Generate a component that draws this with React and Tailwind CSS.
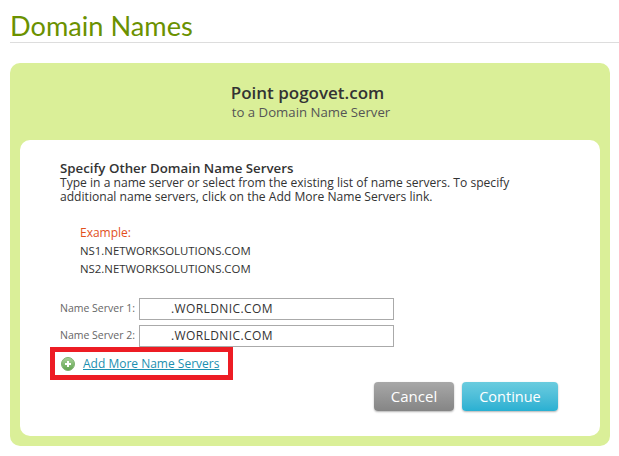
const font = { fontFamily: '"Open Sans", sans-serif' };
const headingFont = { fontFamily: 'Lato, sans-serif' };

const PlusIcon = () => (
  <svg width="14" height="14" viewBox="0 0 14 14" className="shrink-0">
    <defs>
      <linearGradient id="plusFill" x1="0" y1="0" x2="0" y2="1">
        <stop offset="0" stopColor="#a9d39a" />
        <stop offset="1" stopColor="#5fa24e" />
      </linearGradient>
    </defs>
    <circle cx="7" cy="7" r="6.5" fill="url(#plusFill)" stroke="#7fb070" strokeWidth="1" />
    <path d="M7 4v6M4 7h6" stroke="#fff" strokeWidth="2" />
  </svg>
);

const ServerRow = ({ label }) => (
  <div className="flex items-center h-[22px]">
    <span className="w-[79px] text-[10.5px] text-[#666] whitespace-nowrap">{label}</span>
    <div className="w-[255px] h-[22px] border border-[#aaa] bg-white pl-[31px] flex items-center text-[12px] tracking-[0.4px] text-[#333]">
      .WORLDNIC.COM
    </div>
  </div>
);

export default function App() {
  return (
    <div className="w-[619px] h-[456px] bg-white overflow-hidden pl-[10px] pt-[10px]" style={font}>
      <h1 className="text-[27.2px] leading-[32px] h-[33px] text-[#6b9100] border-b border-[#ddd]" style={headingFont}>Domain Names</h1>
      <div className="mt-[20px] w-[600px] h-[383px] bg-[#daef98] rounded-[10px] px-[10px] pt-[18px]">
        <div className="text-center h-[59px]">
          <div className="text-[17px] leading-[24px] font-semibold text-[#333] pr-[5px]">Point pogovet.com</div>
          <div className="text-[13.2px] leading-[15px] text-[#555] pl-[2px]">to a Domain Name Server</div>
        </div>
        <div className="w-[580px] h-[296px] bg-white rounded-[10px] pl-[40px] pt-[20px]">
          <h2 className="text-[13.3px] leading-[16px] font-semibold text-[#333]">Specify Other Domain Name Servers</h2>
          <p className="w-[480px] text-[12.1px] leading-[14px] text-[#333]">
            Type in a name server or select from the existing list of name servers. To specify additional name servers, click on the Add More Name Servers link.
          </p>
          <div className="mt-[20px] ml-[20px] text-[11.4px] leading-[18px] text-[#333]">
            <div className="text-[12px] font-medium text-[#e2501c]">Example:</div>
            <div>NS1.NETWORKSOLUTIONS.COM</div>
            <div>NS2.NETWORKSOLUTIONS.COM</div>
          </div>
          <div className="mt-[20px] flex flex-col gap-[5px]">
            <ServerRow label="Name Server 1:" />
            <ServerRow label="Name Server 2:" />
          </div>
          <div className="-ml-[10px] w-[183px] h-[33px] border-[5px] border-[#ed1c24] flex items-center gap-[8px] pl-[6px]">
            <PlusIcon />
            <a className="text-[12px] font-medium text-[#1b8fb0] underline whitespace-nowrap">Add More Name Servers</a>
          </div>
          <div className="flex justify-end gap-[8px] pr-[42px] mt-[2px]">
            <button className="w-[80px] h-[29px] rounded-[4px] text-[15px] text-white bg-gradient-to-b from-[#a8a8a8] to-[#858585] shadow-[0_1px_2px_rgba(0,0,0,0.3)]">Cancel</button>
            <button className="w-[96px] h-[29px] rounded-[4px] text-[14.5px] text-white bg-gradient-to-b from-[#6accdf] to-[#28b0d2] shadow-[0_1px_2px_rgba(0,0,0,0.3)]">Continue</button>
          </div>
        </div>
      </div>
    </div>
  );
}
